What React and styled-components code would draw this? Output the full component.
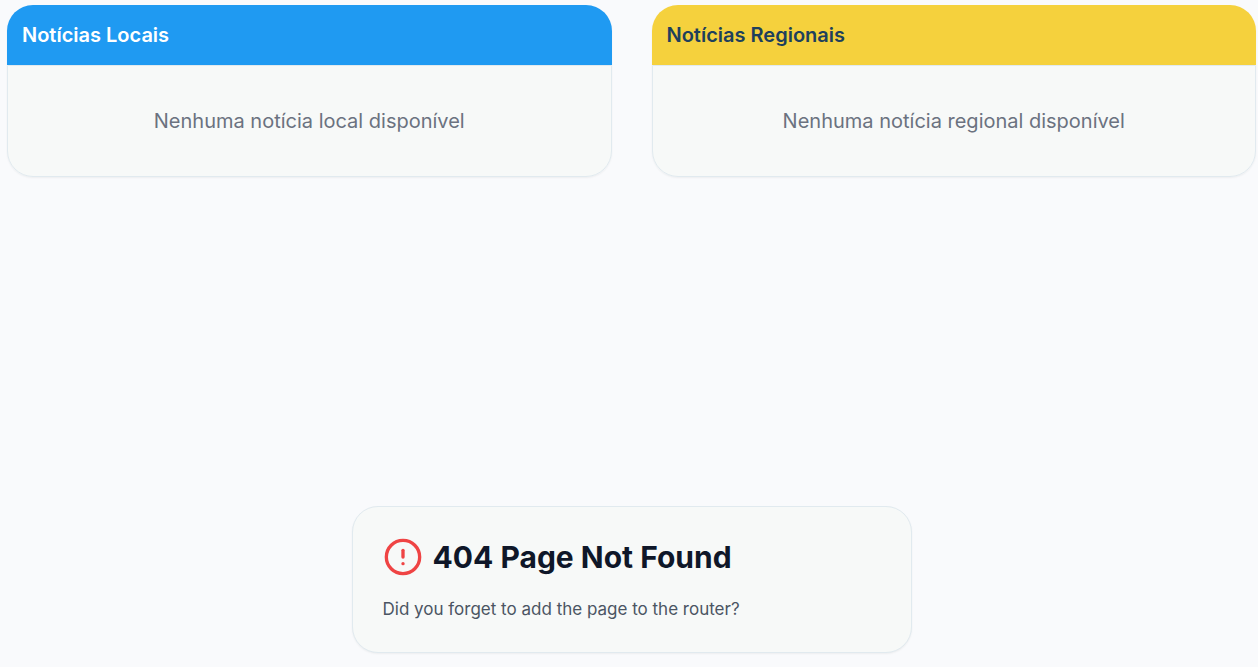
import React from "react";
import styled, { createGlobalStyle } from "styled-components";
import { CircleAlert } from "lucide-react";

const GlobalStyle = createGlobalStyle`
  *, *::before, *::after { box-sizing: border-box; }
  body {
    margin: 0;
    background: #f9fafc;
    color: #0f1729;
    font-family: Inter, "Liberation Sans", sans-serif;
  }
  h1, h2, p { margin: 0; }
`;

const Page = styled.main`
  padding: 5px 2px 14px 7px;
`;

const NewsGrid = styled.div`
  display: grid;
  grid-template-columns: 1fr 1fr;
  gap: 40px;
`;

const NewsPanel = styled.section`
  border-radius: 26px;
  box-shadow: 0 1px 2px rgba(0, 0, 0, 0.05);
`;

const NewsHeading = styled.h2`
  padding: 15px;
  border-radius: 26px 26px 0 0;
  background: ${({ $background }) => $background};
  color: ${({ $color }) => $color};
  font-size: 20px;
  font-weight: 600;
  line-height: 30px;
`;

const EmptyMessage = styled.p`
  padding: 40px 15px;
  border: 1px solid #e1eaef;
  border-radius: 0 0 26px 26px;
  background: #f7f9f8;
  color: #6b7280;
  font-size: 20px;
  line-height: 30px;
  text-align: center;
`;

const ErrorCard = styled.section`
  max-width: 560px;
  margin: 329px auto 0;
  padding: 30px;
  border: 1px solid #e1eaef;
  border-radius: 26px;
  background: #f7f9f8;
  box-shadow: 0 1px 2px rgba(0, 0, 0, 0.05);
`;

const ErrorTitle = styled.div`
  display: flex;
  align-items: center;
  gap: 10px;
  color: #0f1729;

  svg { color: #ef4444; }

  h1 {
    font-size: 30px;
    font-weight: 700;
    line-height: 40px;
  }
`;

const ErrorHint = styled.p`
  margin-top: 20px;
  color: #4b5563;
  font-size: 17px;
  line-height: 25px;
`;

function NewsCard({ title, message, background, color }) {
  return (
    <NewsPanel>
      <NewsHeading $background={background} $color={color}>{title}</NewsHeading>
      <EmptyMessage>{message}</EmptyMessage>
    </NewsPanel>
  );
}

export default function App() {
  return (
    <>
      <GlobalStyle />
      <Page>
        <NewsGrid>
          <NewsCard
            title="Notícias Locais"
            message="Nenhuma notícia local disponível"
            background="#1f9af2"
            color="#ffffff"
          />
          <NewsCard
            title="Notícias Regionais"
            message="Nenhuma notícia regional disponível"
            background="#f5d13d"
            color="#1e405c"
          />
        </NewsGrid>
        <ErrorCard>
          <ErrorTitle>
            <CircleAlert size={40} aria-hidden="true" />
            <h1>404 Page Not Found</h1>
          </ErrorTitle>
          <ErrorHint>Did you forget to add the page to the router?</ErrorHint>
        </ErrorCard>
      </Page>
    </>
  );
}
